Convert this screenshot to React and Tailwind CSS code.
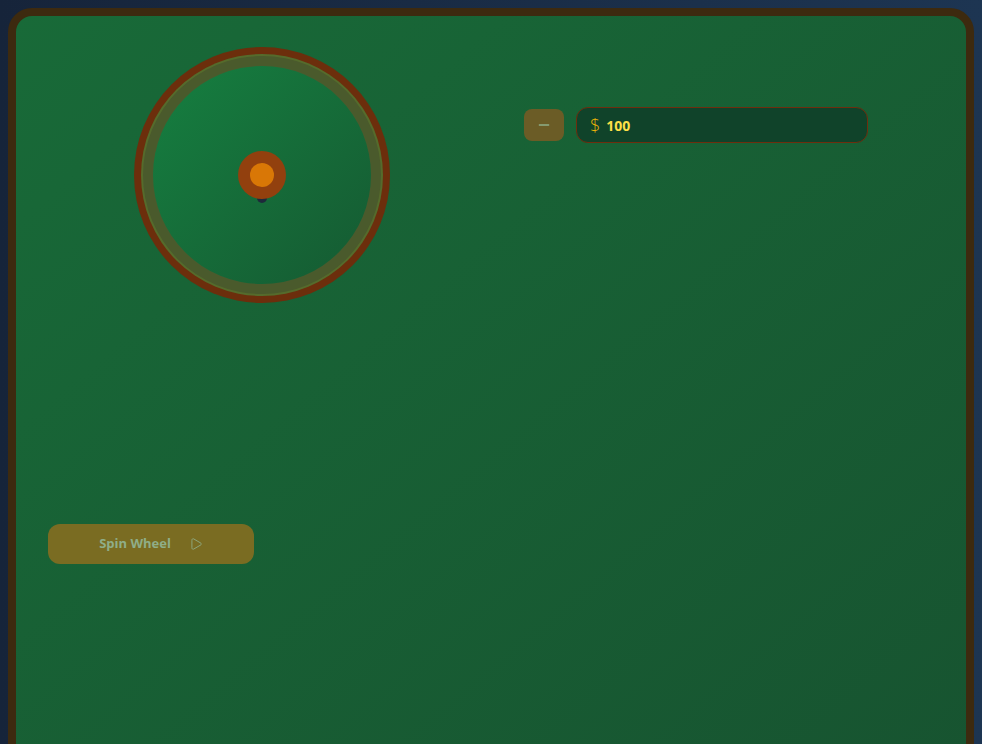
import { Minus, Play } from 'lucide-react';

const Wheel = () => (
    <div className="relative w-[256px] h-[256px] rounded-full bg-[#6c2e0c] p-[7px]">
        <div className="w-full h-full rounded-full bg-[#556b2c] p-[2px]">
            <div className="w-full h-full rounded-full bg-[#4a5a2c] p-[10px]">
                <div className="w-full h-full rounded-full bg-gradient-to-br from-[#157f40] to-[#155a32]" />
            </div>
        </div>
        <div className="absolute left-1/2 top-1/2 -translate-x-1/2 -translate-y-1/2">
            <div className="absolute left-1/2 top-[42px] -translate-x-1/2 w-[10px] h-[10px] rounded-full bg-[#1e293b]" />
            <div className="relative w-12 h-12 rounded-full bg-[#92400e] flex items-center justify-center">
                <div className="w-6 h-6 rounded-full bg-[#d97706]" />
            </div>
        </div>
    </div>
);

export default function App() {
    return (
        <div
            className="h-screen overflow-hidden bg-gradient-to-r from-[#16243a] to-[#1d3552] p-2"
            style={{ fontFamily: '"Open Sans", "Noto Sans", sans-serif' }}
        >
            <div className="h-[820px] rounded-3xl border-8 border-[#3d2a0f] bg-gradient-to-br from-[#186a38] to-[#175330]">
                <div className="flex px-8 pt-[31px]">
                    <div className="w-[428px] flex flex-col">
                        <div className="ml-[86px]">
                            <Wheel />
                        </div>
                        <button className="mt-[221px] w-[206px] h-10 rounded-xl bg-[#7a6c22] flex items-center justify-center gap-[18px] text-[#8fae88] text-[13px] font-bold">
                            <span>Spin Wheel</span>
                            <Play size={14} strokeWidth={1.5} />
                        </button>
                    </div>
                    <div className="ml-12 mt-[60px] flex items-center gap-3 h-9">
                        <button className="w-10 h-8 rounded-lg bg-[#6b5c26] flex items-center justify-center text-[#8fae88]">
                            <Minus size={16} strokeWidth={2} />
                        </button>
                        <div className="w-[292px] h-9 rounded-xl border border-[#6e2e0e] bg-[#10432a] flex items-center px-[13px] gap-[6px]">
                            <span className="text-[#eab308] text-[18px] font-light leading-none">$</span>
                            <span className="text-[#fde047] text-[14px] font-bold">100</span>
                        </div>
                    </div>
                </div>
            </div>
        </div>
    );
}
